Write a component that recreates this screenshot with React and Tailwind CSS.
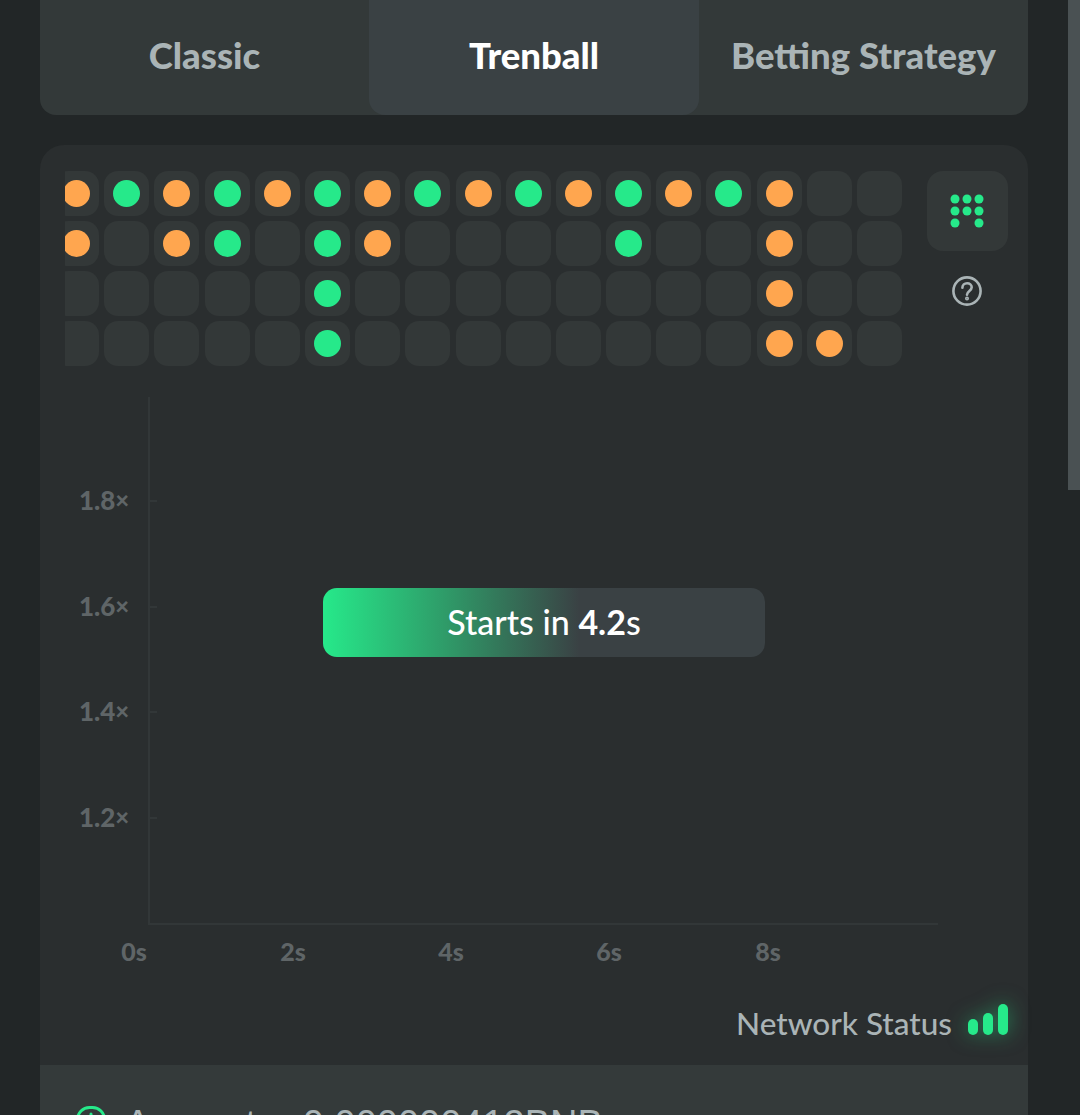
const O = 'o';
const G = 'g';
const rows = [
    [O, G, O, G, O, G, O, G, O, G, O, G, O, G, O, null, null],
    [O, null, O, G, null, G, O, null, null, null, null, G, null, null, O, null, null],
    [null, null, null, null, null, G, null, null, null, null, null, null, null, null, O, null, null],
    [null, null, null, null, null, G, null, null, null, null, null, null, null, null, O, O, null],
];

const tabs = [
    { label: 'Classic', active: false },
    { label: 'Trenball', active: true },
    { label: 'Betting Strategy', active: false },
];

const yTicks = [
    { label: '1.8', y: 501 },
    { label: '1.6', y: 607 },
    { label: '1.4', y: 712 },
    { label: '1.2', y: 818 },
];

const xTicks = [
    { label: '0s', x: 134 },
    { label: '2s', x: 293 },
    { label: '4s', x: 451 },
    { label: '6s', x: 609 },
    { label: '8s', x: 768 },
];

export default function App() {
    return (
        <div className="relative h-[1115px] w-[1080px] overflow-hidden bg-[#222627] font-['Lato',sans-serif]">
            <div className="absolute right-0 top-0 h-[490px] w-3 bg-[#4a5153]" />
            <div className="px-10">
                <div className="grid h-[115px] w-[988px] grid-cols-[329px_330px_329px] rounded-b-2xl bg-[#333939]">
                    {tabs.map((tab) => (
                        <div
                            key={tab.label}
                            className={`flex items-center justify-center rounded-b-2xl pb-[5px] text-[36.5px] font-black ${
                                tab.active
                                    ? 'bg-[#3a4144] text-white'
                                    : 'text-[#aab4b6]'
                            }`}
                        >
                            {tab.label}
                        </div>
                    ))}
                </div>

                <div className="mt-[30px] h-[970px] w-[988px] rounded-t-3xl bg-[#2a2e2f]">
                    <div className="flex pl-[25px] pr-5 pt-[26px]">
                        <div className="flex h-[195px] w-[837px] flex-col gap-[5px] overflow-hidden">
                            {rows.map((row, r) => (
                                <div key={r} className="flex justify-end gap-[5.2px]">
                                    {row.map((cell, c) => (
                                        <div
                                            key={c}
                                            className="flex h-[45px] w-[45px] shrink-0 items-center justify-center rounded-[14px] bg-[#333838]"
                                        >
                                            {cell && (
                                                <div
                                                    className={`h-[27px] w-[27px] rounded-full ${
                                                        cell === O
                                                            ? 'bg-[#ffa64f]'
                                                            : 'bg-[#26e98a]'
                                                    }`}
                                                />
                                            )}
                                        </div>
                                    ))}
                                </div>
                            ))}
                        </div>
                        <div className="ml-[25px] flex w-[81px] flex-col items-center">
                            <div className="flex h-20 w-[81px] items-center justify-center rounded-2xl bg-[#333838]">
                                <svg className="-ml-px" width="36" height="36" viewBox="0 0 36 36" fill="#26e98a">
                                    <circle cx="6" cy="6" r="4.5" />
                                    <circle cx="18" cy="6" r="4.5" />
                                    <circle cx="30" cy="6" r="4.5" />
                                    <circle cx="6" cy="18" r="4.5" />
                                    <circle cx="18" cy="18" r="4.5" />
                                    <circle cx="30" cy="18" r="4.5" />
                                    <circle cx="6" cy="30" r="4.5" />
                                    <circle cx="30" cy="30" r="4.5" />
                                </svg>
                            </div>
                            <svg className="-ml-px mt-[25px]" width="30" height="30" viewBox="0 0 30 30" fill="none" stroke="#aab4b6" strokeWidth="2.6" strokeLinecap="round">
                                <circle cx="15" cy="15" r="13.6" />
                                <path d="M10.4 11.8c0-2.8 2.1-4.5 4.7-4.5 2.6 0 4.6 1.6 4.6 4 0 3.6-4.7 3.7-4.7 7.4" />
                                <circle cx="15" cy="22.6" r="0.7" fill="#aab4b6" />
                            </svg>
                        </div>
                    </div>

                    <div className="relative mt-[31px] h-[592px]">
                        <svg className="absolute left-0 top-0" width="988" height="592" viewBox="0 0 988 592" fill="none" stroke="#323738" strokeWidth="2">
                            <path d="M109 0V527H898" />
                            {yTicks.map((tick) => (
                                <path key={tick.y} d={`M109 ${tick.y - 397}h8`} />
                            ))}
                        </svg>
                        {yTicks.map((tick) => (
                            <div
                                key={tick.y}
                                className="absolute left-[39px] flex h-7 items-center text-[26px] font-black leading-none text-[#5f6567]"
                                style={{ top: tick.y - 397 - 15 }}
                            >
                                {tick.label}
                                <span className="text-[24px]">×</span>
                            </div>
                        ))}
                        {xTicks.map((tick) => (
                            <div
                                key={tick.x}
                                className="absolute top-[540px] flex h-7 w-12 -translate-x-1/2 items-center justify-center text-[25px] font-black leading-none text-[#5f6567]"
                                style={{ left: tick.x - 40 }}
                            >
                                {tick.label}
                            </div>
                        ))}
                        <div className="absolute left-[283px] top-[191px] flex h-[69px] w-[442px] items-center justify-center rounded-[14px] bg-[#3a4144] bg-[linear-gradient(90deg,#26e98a_0%,#2f9a68_28%,#3a4144_58%)] pb-[3px] text-[34px] text-white">
                            <span className="font-medium">Starts in&nbsp;</span>
                            <span className="font-bold">4.2</span>
                            <span className="font-medium">s</span>
                        </div>
                    </div>

                    <div className="flex h-[76px] items-center justify-end gap-4 pb-[6px] pr-5">
                        <span className="text-[31.5px] font-medium text-[#aab4b6]">
                            Network Status
                        </span>
                        <div className="mb-[9px] flex items-end gap-[5px] drop-shadow-[0_0_10px_rgba(38,233,138,0.5)]">
                            <div className="h-4 w-[10px] rounded-full bg-[#26e98a]" />
                            <div className="h-[22px] w-[10px] rounded-full bg-[#26e98a]" />
                            <div className="h-[31px] w-[10px] rounded-full bg-[#26e98a]" />
                        </div>
                    </div>

                    <div className="flex h-[90px] items-start bg-[#343a3a] pl-[36px] pt-[41px] font-['Liberation_Sans',sans-serif] text-[38px] leading-[36px] text-[#aab4b6]">
                        <svg width="30" height="30" viewBox="0 0 30 30" fill="none" stroke="#26e98a" strokeWidth="3" strokeLinecap="round">
                            <rect x="1.5" y="1.5" width="27" height="27" rx="12" />
                            <path d="M15 8v1" />
                        </svg>
                        <div className="ml-[19px]">Amount</div>
                        <div className="ml-[26px]">≈0.000000412BNB</div>
                    </div>
                </div>
            </div>
        </div>
    );
}
